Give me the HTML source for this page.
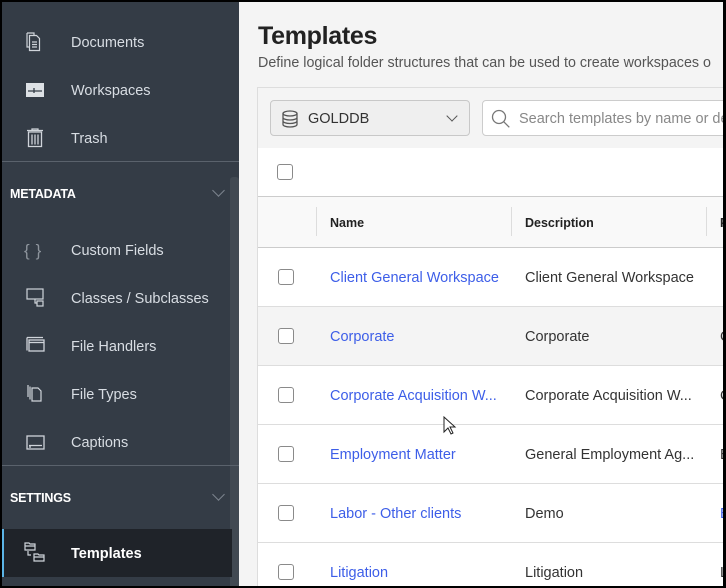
<!DOCTYPE html>
<html><head><style>
*{margin:0;padding:0;box-sizing:border-box}
body{width:726px;height:588px;overflow:hidden;background:#000;font-family:"Liberation Sans",sans-serif;position:relative}
#sb{position:absolute;left:2px;top:2px;width:237px;height:584px;background:#343c46;overflow:hidden}
.it{position:absolute;left:0;width:237px;height:48px;color:#d8dde3;font-size:14.5px;line-height:50px}
.it span{position:absolute;left:69px}
.it svg{position:absolute;left:24px;top:14px}
.hd{position:absolute;left:8px;color:#fff;font-weight:bold;font-size:12.5px;letter-spacing:-0.2px}
.chev{position:absolute;left:212px;width:9px;height:9px;border-right:1.3px solid #7c848e;border-bottom:1.3px solid #7c848e;transform:rotate(45deg)}
.div{position:absolute;left:0;width:237px;height:1px;background:#5a626c}
#main{position:absolute;left:239px;top:2px;width:484px;height:584px;background:#f4f4f4;overflow:hidden}
h1{position:absolute;left:19px;top:20px;font-size:25px;font-weight:bold;color:#222;letter-spacing:-0.3px}
.sub{position:absolute;left:19px;top:53px;font-size:14.3px;color:#555;white-space:nowrap}
#card{position:absolute;left:18px;top:85px;width:480px;height:520px;border:1px solid #ddd;background:#fff}
.tb{position:absolute;left:0;top:0;width:100%;height:60px;background:#f4f4f4}
.sel{position:absolute;left:12px;top:12px;width:200px;height:36px;border:1px solid #c8c8c8;border-radius:4px;background:#efefef;font-size:14.5px;color:#333;line-height:36px}
.srch{position:absolute;left:224px;top:12px;width:260px;height:36px;border:1px solid #ccc;border-radius:4px;background:#fff;font-size:14.5px;color:#888;line-height:36px}
.cb{position:absolute;width:16px;height:16px;border:1.3px solid #8a8a8a;border-radius:3px;background:#fff}
.row{position:absolute;left:0;width:100%;height:59px;border-bottom:1px solid #ddd;font-size:14.5px;line-height:60px;color:#333;white-space:nowrap}
.row .n{position:absolute;left:72px;color:#3d5ee8}
.row .d{position:absolute;left:267px}
.row .e{position:absolute;left:462px}
.row .cb{left:20px;top:21px}
</style></head><body>
<div id="sb">
 <div class="it" style="top:16px"><svg width="16" height="20" viewBox="0 0 16 20" fill="none" stroke="#cfd4da" stroke-width="1.2"><path d="M1 1h7v2M1 1v14h2"/><path d="M3.5 3.5h7l3 3v12h-10z"/><path d="M6 10h5M6 12.5h5M6 15h5"/></svg><span>Documents</span></div>
 <div class="it" style="top:64px"><svg width="18" height="14" viewBox="0 0 18 14" style="top:17px"><rect width="18" height="14" fill="#dde1e5"/><path d="M2 8h14M8 5v5" stroke="#343c46" stroke-width="1.3"/></svg><span>Workspaces</span></div>
 <div class="it" style="top:112px"><svg width="18" height="20" viewBox="0 0 18 20" fill="none" stroke="#cfd4da" stroke-width="1.3"><path d="M1 2.5h16M6 2.5V1h6v1.5M2.5 4h13v14.5h-13z M6 6.5v10M9 6.5v10M12 6.5v10"/></svg><span>Trash</span></div>
 <div class="div" style="top:159px"></div>
 <div style="position:absolute;left:228px;top:175px;width:9px;height:420px;background:#414952;border-radius:3px"></div>
 <div class="hd" style="top:185px">METADATA</div><div class="chev" style="top:184px"></div>
 <div class="it" style="top:224px"><span style="left:22px;color:#8d949c;font-size:17px;letter-spacing:6px">{}</span><span>Custom Fields</span></div>
 <div class="it" style="top:272px"><svg width="20" height="20" viewBox="0 0 20 20" fill="none" stroke="#cfd4da" stroke-width="1.2"><rect x="1" y="1" width="16" height="10"/><path d="M9 11v4h2"/><rect x="11" y="13" width="6" height="5"/></svg><span>Classes / Subclasses</span></div>
 <div class="it" style="top:320px"><svg width="20" height="18" viewBox="0 0 20 18" fill="none" stroke="#cfd4da" stroke-width="1.3"><path d="M1 1.5h16M1 1.5v13"/><rect x="3" y="4" width="15" height="11"/><path d="M3 6.5h15"/></svg><span>File Handlers</span></div>
 <div class="it" style="top:368px"><svg width="18" height="20" viewBox="0 0 18 20" fill="none" stroke="#cfd4da" stroke-width="1.2"><path d="M2 1v12M4 2.5v13"/><path d="M6 4h6l3 3v10H6z"/></svg><span>File Types</span></div>
 <div class="it" style="top:416px"><svg width="20" height="16" viewBox="0 0 20 16" fill="none" stroke="#cfd4da" stroke-width="1.3" style="top:17px"><rect x="1" y="1" width="17" height="13"/><path d="M3 10.5h13M3 12h2"/></svg><span>Captions</span></div>
 <div class="div" style="top:463px"></div>
 <div class="hd" style="top:489px">SETTINGS</div><div class="chev" style="top:488px"></div>
 <div style="position:absolute;left:0;top:527px;width:230px;height:48px;background:#1f2329;border-left:2px solid #5bb4e6"></div>
 <div class="it" style="top:527px;color:#fff;font-weight:bold"><svg width="24" height="24" viewBox="0 0 24 24" fill="none" stroke="#cfd4da" stroke-width="1.2" style="top:12px;left:22px"><path d="M1 2h4l1 1h5v6H1z M1 5h10"/><path d="M4 10v4h3"/><path d="M10 13h4l1 1h5v6H10z M10 16h10"/></svg><span>Templates</span></div>
</div>
<div id="main">
 <h1>Templates</h1>
 <div class="sub">Define logical folder structures that can be used to create workspaces o</div>
 <div id="card">
  <div class="tb">
   <div class="sel"><svg width="18" height="18" viewBox="0 0 18 18" fill="none" stroke="#555" stroke-width="1.3" style="position:absolute;left:10px;top:9px"><ellipse cx="9" cy="3.5" rx="7" ry="2.5"/><path d="M2 3.5v11c0 1.4 3 2.5 7 2.5s7-1.1 7-2.5v-11M2 7.5c0 1.4 3 2.5 7 2.5s7-1.1 7-2.5M2 11c0 1.4 3 2.5 7 2.5s7-1.1 7-2.5"/></svg><span style="position:absolute;left:37px">GOLDDB</span><div style="position:absolute;left:177px;top:11px;width:8px;height:8px;border-right:1.3px solid #555;border-bottom:1.3px solid #555;transform:rotate(45deg)"></div></div>
   <div class="srch"><svg width="20" height="20" viewBox="0 0 20 20" fill="none" stroke="#777" stroke-width="1.3" style="position:absolute;left:8px;top:8px"><circle cx="8" cy="8" r="6.5"/><path d="M12.8 12.8l5.5 5.5"/></svg><span style="position:absolute;left:36px">Search templates by name or de</span></div>
  </div>
  <div class="cb" style="left:19px;top:76px"></div>
  <div style="position:absolute;left:0;top:108px;width:100%;height:52px;background:#f9f9f9;border-top:1px solid #ccc;border-bottom:1px solid #ccc;font-size:12.5px;font-weight:bold;color:#222;line-height:52px">
   <div style="position:absolute;left:58px;top:10px;width:1px;height:29px;background:#ddd"></div><span style="position:absolute;left:72px">Name</span>
   <div style="position:absolute;left:253px;top:10px;width:1px;height:29px;background:#ddd"></div><span style="position:absolute;left:267px">Description</span>
   <div style="position:absolute;left:448px;top:10px;width:1px;height:29px;background:#ddd"></div><span style="position:absolute;left:462px">P</span>
  </div>
  <div class="row" style="top:160px"><div class="cb"></div><span class="n">Client General Workspace</span><span class="d">Client General Workspace</span></div>
  <div class="row" style="top:219px;background:#f4f4f4"><div class="cb"></div><span class="n">Corporate</span><span class="d">Corporate</span><span class="e">C</span></div>
  <div class="row" style="top:278px"><div class="cb"></div><span class="n">Corporate Acquisition W...</span><span class="d">Corporate Acquisition W...</span><span class="e">C</span></div>
  <div class="row" style="top:337px"><div class="cb"></div><span class="n">Employment Matter</span><span class="d">General Employment Ag...</span><span class="e">E</span></div>
  <div class="row" style="top:396px"><div class="cb"></div><span class="n">Labor - Other clients</span><span class="d">Demo</span><span class="e" style="color:#3d5ee8">E</span></div>
  <div class="row" style="top:455px"><div class="cb"></div><span class="n">Litigation</span><span class="d">Litigation</span><span class="e">L</span></div>
 </div>
 <svg width="14" height="20" viewBox="0 0 14 20" style="position:absolute;left:204px;top:414px"><path d="M1 1v15l4-4 3 6 2-1-3-6h5z" fill="#fff" stroke="#222" stroke-width="1"/></svg>
</div>
</body></html>
